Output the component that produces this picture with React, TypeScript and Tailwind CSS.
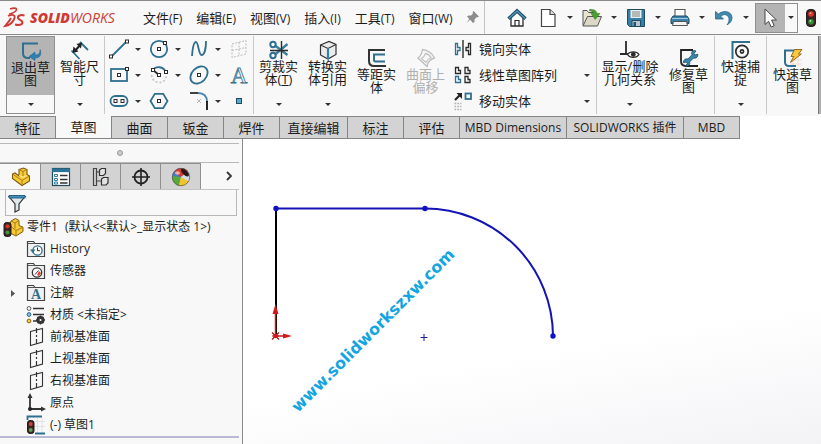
import type { ReactNode } from 'react'

import clsx from 'clsx'

const BLUE = '#2f6f8f'
const DARK = '#2b2b2b'

type IconProps = { children: ReactNode; className?: string; box?: string }

function Icon({ children, className = 'size-5', box = '0 0 20 20' }: IconProps) {
  return (
    <svg viewBox={box} fill="none" className={clsx('shrink-0 overflow-visible', className)} aria-hidden="true">
      {children}
    </svg>
  )
}

function Caret() {
  return (
    <svg viewBox="0 0 6 3" className="w-[6px] h-[3px] shrink-0" aria-hidden="true">
      <path d="M0 0h6L3 3z" fill="#333" />
    </svg>
  )
}

// 小方块控制点
function Grip({ x, y }: { x: number; y: number }) {
  return <rect x={x - 1.5} y={y - 1.5} width="3" height="3" fill="#fff" stroke={DARK} />
}

/* ---------- 菜单栏图标 ---------- */

function DassaultMark() {
  return (
    <Icon className="w-[22px] h-[21px]" box="0 0 22 21">
      <path d="M6 2C9 .8 12.500 .6 12.500 2.500C12.500 4 9 6 5 7.300" stroke="#cf3a35" strokeWidth="1.600" />
      <path
        d="M4 9C9.500 6.500 12 8.500 10 12.500C8 16.500 4 18.500 1 19C3 16.500 5.500 14 7 11"
        stroke="#cf3a35"
        strokeWidth="1.800"
      />
      <path
        d="M20.500 8.500C16.500 7.500 13.500 8.500 14 11C14.300 13 18.500 12.800 18.500 15.500C18.500 18 14.500 18.500 11 17.500"
        stroke="#cf3a35"
        strokeWidth="2"
      />
    </Icon>
  )
}

function PinIcon() {
  return (
    <Icon className="size-[15px]" box="0 0 15 15">
      <path d="M8.500 1L14 6.500L12 7.500L11.500 7.200L9.500 9.500V12L8 13L5.200 9.800L1.500 13L4.400 9L2 6.500L3.500 5.500H6L8 3.500L7.500 2.500z" fill="#8c8c8c" />
    </Icon>
  )
}

function HomeIcon() {
  return (
    <Icon>
      <path d="M4 9.500V18h12V9.500L10 4z" fill="#fdfdfd" stroke={DARK} strokeWidth="1.300" />
      <path d="M1.500 10.800L10 2.800L18.500 10.800" stroke="#1e4c63" strokeWidth="3.400" />
      <path d="M1.800 10.600L10 2.900L18.200 10.600" stroke="#4b93b5" strokeWidth="1.400" />
      <path d="M8 18v-5.500h4V18" stroke={DARK} strokeWidth="1.200" />
    </Icon>
  )
}

function NewIcon() {
  return (
    <Icon>
      <path d="M3.500 1.500h8.500l5 5v12H3.500z" fill="#fff" stroke="#444" strokeWidth="1.200" />
      <path d="M12 1.500v5h5" fill="#ddd" stroke="#444" strokeWidth="1.200" />
    </Icon>
  )
}

function OpenIcon() {
  return (
    <Icon>
      <path d="M1 17.500V2.500h4l1.500 2h7v4" fill="#e8e4d2" stroke="#555" />
      <path d="M1 18L5.500 8.500h14L15.500 18z" fill="#dcd8c8" stroke="#555" />
      <path d="M7.500 1.500c4.500-.5 7 1 7.500 4h3l-4.800 6L9 5.500h2.500c0-1.800-1.500-2.700-4-2.600z" fill="#48a02e" stroke="#2c7420" strokeWidth=".5" />
    </Icon>
  )
}

function SaveIcon() {
  return (
    <Icon>
      <path d="M1.500 1.500h17v17H3.500l-2-2z" fill="#3580a8" stroke="#1f4b63" />
      <path d="M4.500 2h11v8h-11z" fill="#e9eef1" />
      <path d="M6 4h8M6 6h8M6 8h8" stroke="#777" strokeWidth=".9" />
      <path d="M6 12.500h8.500v6H6z" fill="#b9c6cd" stroke="#1f4b63" />
      <path d="M7.500 14h2.500v4H7.500z" fill="#25526b" />
    </Icon>
  )
}

function PrintIcon() {
  return (
    <Icon>
      <path d="M5 9V1.500h10V9" fill="#fff" stroke="#555" strokeWidth="1.100" />
      <path d="M3 8h14l2 3v4.500H1V11z" fill="#3a82aa" stroke="#1f4b63" />
      <path d="M2 10.500h16" stroke="#9bcae0" />
      <path d="M3.500 13.500h13l1 4h-15z" fill="#f4f4f4" stroke="#555" />
    </Icon>
  )
}

function UndoIcon() {
  return (
    <Icon>
      <path
        d="M1.500 3.500V11h8L6.700 8.200C10 5.500 14.500 6.500 15 10.500C15.300 12.800 14.500 15 13 16.800C17 15 19 11 17.500 7.300C15.500 3 9 2.300 4.500 6z"
        fill="#4289ae"
        stroke="#2a6686"
        strokeWidth=".8"
      />
    </Icon>
  )
}

function CursorIcon() {
  return (
    <Icon>
      <path d="M5 1v15.500l3.600-3.200L11.200 19l3-1.300L11.600 12H16.500z" fill="#fff" stroke="#444" />
    </Icon>
  )
}

function TrafficLight({ className = 'w-[10px] h-[18px]' }: { className?: string }) {
  return (
    <Icon className={className} box="0 0 10 18">
      <rect x=".5" y=".5" width="9" height="17" rx="3.500" fill="#3c2222" stroke="#1e1e1e" />
      <circle cx="5" cy="5" r="2.800" fill="#e0342b" />
      <circle cx="4.400" cy="4.200" r=".9" fill="#f6a49c" />
      <circle cx="5" cy="12.800" r="2.800" fill="#2f8f35" />
      <circle cx="4.400" cy="12" r=".9" fill="#b5e0a2" />
    </Icon>
  )
}

/* ---------- 草图工具图标 ---------- */

const LineIcon = () => (
  <Icon>
    <path d="M2 18L18 2" stroke={BLUE} strokeWidth="1.800" />
    <Grip x={2} y={17.5} />
    <Grip x={18} y={2.5} />
  </Icon>
)

const CircleIcon = () => (
  <Icon>
    <circle cx="10" cy="10" r="8.200" stroke={BLUE} strokeWidth="1.800" />
    <Grip x={10} y={10} />
    <Grip x={16} y={4} />
  </Icon>
)

const SplineIcon = () => (
  <Icon>
    <path d="M3 17C3.500 10 4.500 3 7 3S9.500 16 12.500 16S17 9 17 2" stroke={BLUE} strokeWidth="1.800" />
  </Icon>
)

const PlaneGridIcon = () => (
  <Icon>
    <path d="M3 5L17 1.500V15L3 18.500zM10 3v14M3 11.500l14-3" stroke="#b9b9b9" strokeDasharray="2 1.500" />
  </Icon>
)

const RectIcon = () => (
  <Icon>
    <rect x="2" y="4" width="16" height="12" stroke={BLUE} strokeWidth="1.800" />
    <Grip x={10} y={10} />
    <Grip x={18} y={4} />
  </Icon>
)

const ArcIcon = () => (
  <Icon>
    <path d="M4 5C7 1 14 1 17 7" stroke={BLUE} strokeWidth="1.800" />
    <path d="M2.500 10C3.500 20 17 20 17.500 10" stroke="#c4c4c4" strokeWidth="1.600" strokeDasharray="2 2" />
    <path d="M4 5l6 5" stroke={DARK} strokeWidth="1.800" />
    <Grip x={4} y={5} />
    <Grip x={10} y={10} />
    <Grip x={17} y={7} />
  </Icon>
)

const EllipseIcon = () => (
  <Icon>
    <ellipse cx="10" cy="10" rx="9.800" ry="7.200" transform="rotate(-45 10 10)" stroke={BLUE} strokeWidth="1.800" />
    <Grip x={10} y={10} />
  </Icon>
)

// 文字工具，空心字母
const TextToolIcon = () => (
  <Icon>
    <text
      x="10"
      y="18"
      textAnchor="middle"
      fontFamily="Liberation Serif, serif"
      fontSize="23"
      fill="#f6f9fa"
      stroke={BLUE}
      strokeWidth=".8"
    >
      A
    </text>
  </Icon>
)

const SlotIcon = () => (
  <Icon>
    <rect x="1.500" y="5" width="17" height="10" rx="5" stroke={BLUE} strokeWidth="1.800" />
    <Grip x={6.5} y={10} />
    <Grip x={13.5} y={10} />
  </Icon>
)

const PolygonIcon = () => (
  <Icon>
    <path d="M5.800 2.800h8.400L18.500 10l-4.300 7.200H5.800L1.500 10z" stroke={BLUE} strokeWidth="1.800" />
    <Grip x={10} y={10} />
  </Icon>
)

const FilletIcon = () => (
  <Icon>
    <path d="M1 2h8" stroke={DARK} strokeWidth="1.800" />
    <path d="M9 2c6 0 9 3 9 9" stroke="#4a87b5" strokeWidth="1.800" />
    <path d="M18 10v9" stroke="#111" strokeWidth="1.800" />
    <path d="M8 8l4 4M12 8l-4 4" stroke="#b5b5b5" />
  </Icon>
)

const PointIcon = () => (
  <Icon>
    <rect x="7.500" y="7.500" width="5" height="5" fill="#5aa7c8" stroke="#1f4b63" />
  </Icon>
)

/* ---------- 功能区大图标 ---------- */

const ExitSketchIcon = () => (
  <Icon>
    <path d="M17 2.500H2v9.500c0 3 1.500 5 5 5h2" stroke={BLUE} strokeWidth="2" />
    <path d="M19 8.500c.3 4-1.700 5.500-5 5.500v-3l-6 4.500 6 4V17c5 0 7-3.500 5-8.500z" fill="#2b83b5" stroke="#1d5d82" strokeWidth=".5" />
  </Icon>
)

const DimensionIcon = () => (
  <Icon>
    <path d="M10 2l8 8M1.500 10.500l8 8.500" stroke={BLUE} strokeWidth="1.800" />
    <path d="M4.500 11.500L10.500 4.500" stroke="#222" strokeWidth="2" />
    <path d="M2.500 13l1-6.500 5 5zM12 2.500L6.500 4l4.500 4.500z" fill="#222" />
  </Icon>
)

const TrimIcon = () => (
  <Icon>
    <path d="M6 5.500L18.500 15M6 14.500L18.500 4" stroke="#3f7f9e" strokeWidth="2.400" />
    <path d="M12.500 1v18M1 10.500h18" stroke={DARK} strokeWidth="1.400" />
    <circle cx="4" cy="4.500" r="2.700" stroke={BLUE} strokeWidth="2" />
    <circle cx="4" cy="15.500" r="2.700" stroke={BLUE} strokeWidth="2" />
  </Icon>
)

const ConvertIcon = () => (
  <Icon>
    <path d="M2.500 5L11 1.500l7 3v10L10 19l-7.500-4z" fill="#ececec" stroke="#333" strokeWidth="1.200" />
    <path d="M2.500 5L10 8.500l8-4" stroke="#333" strokeWidth="1.100" />
    <path d="M10 8.500V19" stroke="#2f83ad" strokeWidth="2.200" />
  </Icon>
)

const OffsetIcon = () => (
  <Icon>
    <path d="M18 2H2v11c0 4 2 5 5 5h12" stroke="#333" strokeWidth="2" />
    <path d="M18 6.500H7V12c0 1 .5 1.500 1.500 1.500H18" stroke={BLUE} strokeWidth="2" />
  </Icon>
)

const SurfaceOffsetIcon = () => (
  <Icon>
    <path d="M2 10C5 8 6 5 6.500 1.500C11 2 16.500 5 18.500 10C14 11 12 14 11 18.500z" stroke="#bcbcbc" strokeWidth="1.300" />
    <path d="M5.500 10.500C8 9 9 7 9.500 5.500C12 6 14 7.500 15 9.500C12.500 10.500 11 12 10 14.500z" stroke="#c4c4c4" strokeWidth="1.300" />
  </Icon>
)

const RelationIcon = () => (
  <Icon>
    <path d="M6 1v13M0 14h9" stroke={DARK} strokeWidth="1.800" />
    <path d="M7.500 14.500C10 11 16.500 11 19 14.500C16.500 18.500 10 18.500 7.500 14.500z" fill="#fff" stroke={DARK} strokeWidth="1.200" />
    <circle cx="13.300" cy="14.500" r="2.400" fill={DARK} />
  </Icon>
)

const RepairIcon = () => (
  <Icon>
    <path d="M14 2H2v11c0 3 1.500 5 5 5h12" stroke="#222" strokeWidth="1.800" />
    <path
      d="M13 3.500c2-1.500 3.500-1 4-.5l-2 2.500.8 1.500 3-.8c.5 3-2 4.500-4.300 3.800L10.500 14c1 2.500-1 4.500-4 4l1.800-2.500-1-1.500-2.800.8c-.3-3 2-4.500 4.500-3.800l4-4.200c-.3-1.200-.5-2.300 0-3.300z"
      fill="#3b86ac"
      stroke="#174a66"
      strokeWidth=".8"
    />
  </Icon>
)

const SnapIcon = () => (
  <Icon>
    <path d="M1.500 19V2H19" stroke={BLUE} strokeWidth="2" />
    <circle cx="11" cy="11.500" r="6.200" stroke={DARK} strokeWidth="1.700" />
    <circle cx="11" cy="11.500" r="1.600" stroke={DARK} strokeWidth="1.600" />
  </Icon>
)

const RapidIcon = () => (
  <Icon>
    <path d="M7 12h12M7 16h12M10 8v11M15 8v11" stroke="#f1d6c4" strokeWidth=".8" />
    <path d="M14 2.500H2V14c0 2.500 1.500 4 4 4h7" stroke={BLUE} strokeWidth="2" />
    <path d="M11.500 1.500H19l-3.500 4.500h2.800L7.500 14.500l3.300-6H8z" fill="#fbc63b" stroke="#8a5c18" strokeWidth=".9" />
  </Icon>
)

const MirrorIcon = () => (
  <Icon>
    <path d="M10 1v18" stroke={DARK} strokeWidth="1.400" />
    <path d="M2.500 4.500v11h2v-4h2.500v-3H4.500v-4z" stroke={BLUE} strokeWidth="1.300" />
    <path d="M17.500 4.500v11h-2v-4H13v-3h2.500v-4z" stroke={DARK} strokeWidth="1.300" />
  </Icon>
)

const PatternIcon = () => (
  <Icon>
    <path d="M2.500 2.500v6h5v-3h-2v-3zM12 2.500v6h5v-3h-2v-3zM12 11.500v6h5v-3h-2v-3z" stroke={DARK} strokeWidth="1.300" />
    <path d="M2.500 11.500v6h5v-3h-2v-3z" stroke={BLUE} strokeWidth="1.300" />
  </Icon>
)

const MoveIcon = () => (
  <Icon>
    <path d="M2 9l5-5" stroke="#222" strokeWidth="2.200" />
    <path d="M3.500 2H9v6z" fill="#222" />
    <rect x="12.500" y="2.500" width="5.500" height="5.500" stroke={BLUE} strokeWidth="1.800" />
    <path d="M1.500 12.500h7M1.500 15.500h7M1.500 18.500h7" stroke="#b0b0b0" strokeWidth="1.600" strokeDasharray="1.700 1.200" />
  </Icon>
)

/* ---------- 设计树图标 ---------- */

const PartIcon = () => (
  <Icon>
    <path d="M8 2.500L12.500 1l3.500 1.500v5l2.500 1.500v5L11 18.500l-9.500-7V7L4 6l4 3z" fill="#f7cb35" stroke="#7d5a12" strokeWidth="1.100" />
    <path d="M8 2.500l4 2 4-2M12 4.500v5M1.500 7L11 13.500l7.500-4.500M11 13.500v5" stroke="#a87c18" />
    <path d="M8 8.500l4 1.700 3.500-1.700" stroke="#fff0a8" />
  </Icon>
)

const PropertyIcon = () => (
  <Icon>
    <rect x="1.500" y="1.500" width="17" height="17" fill="#fff" stroke="#25495c" strokeWidth="1.200" />
    <path d="M1 3.300h18" stroke="#2b7297" strokeWidth="3.600" />
    <path d="M9 8.500h7.500M9 12.500h7.500M9 16h7.500" stroke="#333" strokeWidth="1.300" />
    <path d="M3.500 7.500h3v2h-3zM3.500 11.500h3v2h-3zM3.500 15h3v2h-3z" stroke="#2f7fa5" />
  </Icon>
)

const ConfigIcon = () => (
  <Icon>
    <path d="M2.500 1.500h3v17h-3zM5.500 5h4M5.500 14h5" stroke="#444" strokeWidth="1.200" />
    <path d="M8.500 3l2-1.500h4v5L12.500 8.500h-4zM10.500 12l2-1.500h4.500V16l-2 2h-4.500z" fill="#e2e2e2" stroke="#333" strokeWidth="1.200" />
  </Icon>
)

const DimXpertIcon = () => (
  <Icon>
    <circle cx="10" cy="10" r="6.500" stroke="#222" strokeWidth="1.800" />
    <path d="M10 1v18M1 10h18" stroke="#222" strokeWidth="1.600" />
  </Icon>
)

const AppearanceIcon = () => (
  <Icon>
    <path d="M10 10L1.500 12A9 9 0 0 1 11 1z" fill="#4777c8" />
    <path d="M10 10L3 5A9 9 0 0 1 17 4z" fill="#d93a2e" />
    <path d="M1 9a9 9 0 0 0 7 10l2-9z" fill="#58a93c" />
    <path d="M8 19a9 9 0 0 0 10-5l-8-4z" fill="#f3c42f" />
    <path d="M18 14a9 9 0 0 0 0-8l-8 4z" fill="#d6dfe8" />
    <ellipse cx="14" cy="5.500" rx="2.300" ry="5" transform="rotate(-45 14 5.500)" fill="#2c1717" />
    <circle cx="10" cy="10" r="8.700" stroke="#555" strokeWidth=".7" />
    <ellipse cx="6.500" cy="6" rx="2.500" ry="1.800" fill="#fff" opacity=".6" />
  </Icon>
)

const FilterIcon = () => (
  <Icon>
    <path d="M2 3.500h16l-6 7.500v6l-4 2v-8z" fill="#dfe8ec" stroke="#333" strokeWidth="1.200" />
    <path d="M2 2.500h16V5H2z" fill="#3c93bd" stroke="#1f5775" strokeWidth=".9" />
  </Icon>
)

const RootIcon = () => (
  <Icon className="size-[21px]" box="0 0 21 20">
    <path d="M8 3.500L12.500 1l3.500 2v5l4 1.700V14l-7 4.500L6 15V8z" fill="#f7cb35" stroke="#7d5a12" />
    <path d="M8 3.500l4 2 4-2.500M12 5.500V11M8 9l5 4 7-3.300M13 13v5.500" stroke="#a87c18" />
    <rect x="1" y="5" width="7" height="14" rx="2.500" fill="#3c2222" stroke="#1e1e1e" />
    <circle cx="4.500" cy="8.800" r="2.100" fill="#d8352d" />
    <circle cx="4.500" cy="15" r="2.100" fill="#3f9440" />
  </Icon>
)

function FolderIcon({ children }: { children: ReactNode }) {
  return (
    <Icon>
      <path d="M1.500 17.500v-15h6l1.500 2h9.500v13z" fill="#f0f0f0" stroke="#444" strokeWidth="1.200" />
      <path d="M2 4.500h7" stroke="#555" />
      {children}
    </Icon>
  )
}

const HistoryIcon = () => (
  <FolderIcon>
    <circle cx="11.500" cy="11.500" r="4.600" fill="#fff" stroke={BLUE} strokeWidth="1.300" />
    <path d="M11.500 8.500v3.200h2.500" stroke="#333" />
    <path d="M4 10.500h5.500L6.700 14z" fill={BLUE} />
  </FolderIcon>
)

const SensorIcon = () => (
  <FolderIcon>
    <circle cx="11" cy="11.500" r="4.700" fill="#fff" stroke="#333" strokeWidth="1.300" />
    <path d="M9 13.500l3.500-4" stroke="#333" />
    <path d="M13 10l2 2-2 3-2-1z" fill="#dc4637" />
  </FolderIcon>
)

const AnnotationIcon = () => (
  <FolderIcon>
    <text x="10" y="16" textAnchor="middle" fontFamily="Liberation Serif, serif" fontWeight="700" fontSize="14" fill={BLUE}>
      A
    </text>
  </FolderIcon>
)

const MaterialIcon = () => (
  <Icon>
    <path d="M7 3.500h11M7 9.500h11M7 16h5" stroke="#333" strokeWidth="1.600" />
    <circle cx="3" cy="3.500" r="1.900" fill="#fff" stroke="#555" />
    <circle cx="3" cy="9.500" r="1.900" fill="#7fc1e2" stroke="#2b6688" />
    <circle cx="3" cy="16" r="1.900" fill="#f7ca3c" stroke="#8b6814" />
    <circle cx="14.500" cy="15" r="3" stroke="#333" strokeWidth="2" />
    <path d="M14.500 10.500v9M10 15h9M11.500 12l6 6M17.500 12l-6 6" stroke="#333" strokeWidth="1.300" />
    <circle cx="14.500" cy="15" r="1" fill="#fff" />
  </Icon>
)

const PlaneIcon = () => (
  <Icon>
    <path d="M4.500 4.500L16.500 1.500V15L4.500 18.500z" stroke="#333" strokeWidth="1.100" />
    <path d="M10.500 1v18" stroke="#333" strokeWidth="1.200" strokeDasharray="5 2 2 2" />
  </Icon>
)

const OriginIcon = () => (
  <Icon>
    <path d="M4 3v13h13" stroke="#333" strokeWidth="1.800" />
    <path d="M4 0l2.500 5h-5zM20 16l-5-2.500v5z" fill="#333" />
    <circle cx="4" cy="16" r="2" fill="#222" />
  </Icon>
)

const SketchIcon = () => (
  <Icon>
    <path d="M8 6.500h11M8 11.500h11M11.500 3v15M16 3v15" stroke="#d9dfe2" strokeWidth=".8" />
    <path d="M1.500 5V1.500H16M9 18.500h10" stroke={BLUE} strokeWidth="1.800" />
    <rect x="1.500" y="5.500" width="6.500" height="13" rx="2.500" fill="#3c2222" stroke="#1e1e1e" />
    <circle cx="4.700" cy="9" r="2" fill="#c8463c" />
    <circle cx="4.700" cy="15" r="2" fill="#5ba356" />
  </Icon>
)

/* ---------- 数据 ---------- */

const menus = [
  { label: '文件', key: '(F)' },
  { label: '编辑', key: '(E)' },
  { label: '视图', key: '(V)' },
  { label: '插入', key: '(I)' },
  { label: '工具', key: '(T)' },
  { label: '窗口', key: '(W)' },
]

const quickTools = [
  { name: '新建', icon: <NewIcon /> },
  { name: '打开', icon: <OpenIcon /> },
  { name: '保存', icon: <SaveIcon /> },
  { name: '打印', icon: <PrintIcon /> },
  { name: '撤销', icon: <UndoIcon /> },
]

const sketchTools = [
  { name: '直线', icon: <LineIcon />, menu: true },
  { name: '圆', icon: <CircleIcon />, menu: true },
  { name: '样条曲线', icon: <SplineIcon />, menu: true },
  { name: '基准面', icon: <PlaneGridIcon />, menu: false },
  { name: '矩形', icon: <RectIcon />, menu: true },
  { name: '圆弧', icon: <ArcIcon />, menu: true },
  { name: '椭圆', icon: <EllipseIcon />, menu: true },
  { name: '文字', icon: <TextToolIcon />, menu: false },
  { name: '槽口', icon: <SlotIcon />, menu: true },
  { name: '多边形', icon: <PolygonIcon />, menu: false },
  { name: '圆角', icon: <FilletIcon />, menu: true },
  { name: '点', icon: <PointIcon />, menu: false },
]

const patternTools = [
  { label: '镜向实体', icon: <MirrorIcon />, menu: false },
  { label: '线性草图阵列', icon: <PatternIcon />, menu: true },
  { label: '移动实体', icon: <MoveIcon />, menu: true },
]

const ribbonTabs = [
  { label: '特征', width: 'w-14' },
  { label: '草图', width: 'w-14' },
  { label: '曲面', width: 'w-14' },
  { label: '钣金', width: 'w-14' },
  { label: '焊件', width: 'w-14' },
  { label: '直接编辑', width: 'w-[68px]' },
  { label: '标注', width: 'w-14' },
  { label: '评估', width: 'w-14' },
  { label: 'MBD Dimensions', width: 'w-[107px]' },
  { label: 'SOLIDWORKS 插件', width: 'w-[117px]' },
  { label: 'MBD', width: 'w-14' },
]

const panelTabs = [
  { name: '设计树', icon: <PartIcon /> },
  { name: '属性', icon: <PropertyIcon /> },
  { name: '配置', icon: <ConfigIcon /> },
  { name: '尺寸专家', icon: <DimXpertIcon /> },
  { name: '外观', icon: <AppearanceIcon /> },
]

const treeItems = [
  { label: 'History', icon: <HistoryIcon /> },
  { label: '传感器', icon: <SensorIcon /> },
  { label: '注解', icon: <AnnotationIcon />, expandable: true },
  { label: '材质 <未指定>', icon: <MaterialIcon /> },
  { label: '前视基准面', icon: <PlaneIcon /> },
  { label: '上视基准面', icon: <PlaneIcon /> },
  { label: '右视基准面', icon: <PlaneIcon /> },
  { label: '原点', icon: <OriginIcon /> },
  { label: '(-) 草图1', icon: <SketchIcon /> },
]

/* ---------- 布局 ---------- */

function TopBar() {
  return (
    <header className="flex items-center h-[35px] border-y border-[#8a8a8a] bg-[#f8f8f8]">
      <div className="flex items-center w-[143px] pl-1 gap-1 shrink-0">
        <DassaultMark />
        <span className="text-sm leading-5 italic text-[#cf3a35]">
          <b className="font-extrabold">SOLID</b>WORKS
        </span>
      </div>
      <nav className="flex items-center gap-[14px] shrink-0">
        {menus.map(menu => (
          <button key={menu.key} className="text-[13px] leading-5 whitespace-nowrap">
            {menu.label}
            <span className="text-xs">{menu.key}</span>
          </button>
        ))}
      </nav>
      <button aria-label="固定菜单" className="ml-3 mr-1 shrink-0">
        <PinIcon />
      </button>
      <div className="flex items-center self-stretch flex-1 border-l border-[#c4c4c4] pl-[22px]">
        <button aria-label="主页" className="mr-2">
          <HomeIcon />
        </button>
        {quickTools.map(tool => (
          <div key={tool.name} className="flex">
            <button aria-label={tool.name} className="flex justify-center w-[26px]">
              {tool.icon}
            </button>
            <button aria-label={`${tool.name}选项`} className="flex items-center justify-center w-[18px]">
              <Caret />
            </button>
          </div>
        ))}
        <div className="flex h-[30px] border border-[#8f8f8f] shrink-0">
          <button aria-label="选择" className="flex items-center justify-center w-[29px] bg-[#b4b4b4]">
            <CursorIcon />
          </button>
          <button aria-label="选择选项" className="flex items-center justify-center w-3">
            <Caret />
          </button>
        </div>
        <button aria-label="重建模型" className="ml-2 shrink-0">
          <TrafficLight />
        </button>
      </div>
    </header>
  )
}

type BigButtonProps = {
  icon: ReactNode
  label: ReactNode
  menu?: boolean
  active?: boolean
  disabled?: boolean
  width?: string
  labelWidth?: string
}

function BigButton({
  icon,
  label,
  menu,
  active,
  disabled,
  width = 'w-[49px]',
  labelWidth = 'w-10',
}: BigButtonProps) {
  return (
    <div className={clsx('flex flex-col h-[78px] shrink-0', width, active && 'border border-[#8f8f8f]')}>
      <button
        disabled={disabled}
        className={clsx(
          'flex flex-col items-center text-[13px] leading-[13px]',
          menu ? 'h-[58px] pt-1' : 'flex-1 pt-3',
          active && 'bg-[#b4b4b4]',
          disabled && 'text-[#b0b0b0]',
        )}
      >
        {icon}
        <span className={labelWidth}>{label}</span>
      </button>
      {menu && (
        <button aria-label="更多" className="flex items-center justify-center flex-1">
          <Caret />
        </button>
      )}
    </div>
  )
}

function Separator() {
  return <div className="w-px h-[78px] bg-[#c8c8c8] shrink-0" />
}

function Ribbon() {
  return (
    <section className="flex h-[81px] pt-px pl-[6px] bg-[#f8f8f8]">
      <BigButton icon={<ExitSketchIcon />} label="退出草图" menu active />
      <BigButton icon={<DimensionIcon />} label="智能尺寸" menu />
      <Separator />
      <div className="grid grid-cols-[40px_40px_40px_20px] auto-rows-[26px] px-1 shrink-0">
        {sketchTools.map(tool => (
          <div key={tool.name} className="flex items-center">
            <button aria-label={tool.name}>{tool.icon}</button>
            {tool.menu && (
              <button aria-label={`${tool.name}选项`} className="flex items-center justify-center w-[18px] h-5">
                <Caret />
              </button>
            )}
          </div>
        ))}
      </div>
      <Separator />
      <BigButton
        icon={<TrimIcon />}
        label={
          <>
            剪裁实体(<u>T</u>)
          </>
        }
        menu
      />
      <BigButton icon={<ConvertIcon />} label="转换实体引用" menu />
      <BigButton icon={<OffsetIcon />} label="等距实体" />
      <BigButton icon={<SurfaceOffsetIcon />} label="曲面上偏移" disabled />
      <div className="grid auto-rows-[26px] w-[146px] pl-[3px] shrink-0">
        {patternTools.map(tool => (
          <div key={tool.label} className="flex items-center justify-between">
            <button className="flex items-center gap-[6px] text-[13px] leading-5 whitespace-nowrap">
              {tool.icon}
              {tool.label}
            </button>
            {tool.menu && (
              <button aria-label={`${tool.label}选项`} className="flex items-center justify-center w-[18px] h-5">
                <Caret />
              </button>
            )}
          </div>
        ))}
      </div>
      <Separator />
      <BigButton icon={<RelationIcon />} label="显示/删除几何关系" menu width="w-[66px]" labelWidth="w-[60px]" />
      <BigButton icon={<RepairIcon />} label="修复草图" width="w-[51px]" />
      <Separator />
      <BigButton icon={<SnapIcon />} label="快速捕捉" menu width="w-[51px]" />
      <Separator />
      <BigButton icon={<RapidIcon />} label="快速草图" width="w-[51px]" />
      <div className="flex-1 h-[78px] bg-[#b0b0b0] border-l border-[#777]" />
    </section>
  )
}

function RibbonTabs() {
  return (
    <div role="tablist" className="flex h-[23px] bg-white">
      {ribbonTabs.map(tab => {
        const active = tab.label === '草图'
        return (
          <button
            key={tab.label}
            role="tab"
            aria-selected={active}
            className={clsx(
              'flex items-center justify-center shrink-0 text-[13px] leading-5 whitespace-nowrap border-b border-[#858585]',
              tab.width,
              active ? 'bg-[#f8f8f8] border-r' : 'bg-[#d3d3d3] border-t border-r',
            )}
          >
            <span className={clsx(/^[A-Z]/.test(tab.label) && 'text-xs')}>{tab.label}</span>
          </button>
        )
      })}
    </div>
  )
}

function FeaturePanel() {
  return (
    <aside className="w-[243px] shrink-0 bg-[#f8f8f8] border-r border-[#8a8a8a]">
      <div className="flex items-center justify-center h-5 mt-1 mr-[3px] border-y border-[#b8b8b8]">
        <span className="size-[6px] rounded-full border border-[#999] bg-[#ccc]" />
      </div>
      <div className="flex items-stretch h-[27px] mr-[3px] border-b border-[#c4c4c4]">
        <div role="tablist" className="flex border-t border-[#8f8f8f] pl-px">
          {panelTabs.map((tab, index) => (
            <button
              key={tab.name}
              role="tab"
              aria-label={tab.name}
              aria-selected={index === 0}
              className={clsx(
                'flex items-center justify-center w-10 border-r border-[#8f8f8f]',
                index === 0 ? 'bg-[#f8f8f8]' : 'bg-[#d3d3d3]',
              )}
            >
              {tab.icon}
            </button>
          ))}
        </div>
        <button aria-label="更多标签" className="flex items-center ml-auto mr-[7px]">
          <svg viewBox="0 0 6 10" className="w-[6px] h-[10px]" fill="none" aria-hidden="true">
            <path d="M1 1l4 4-4 4" stroke="#333" strokeWidth="1.800" />
          </svg>
        </button>
      </div>
      <label className="flex items-center h-[26px] ml-[5px] mr-[5px] pl-px border border-t-0 border-[#b8b8b8]">
        <FilterIcon />
        <input aria-label="过滤" className="flex-1 min-w-0 px-1 text-xs bg-transparent outline-none" />
      </label>
      <ul className="border-b-2 border-[#b9b9d3] mr-[3px] text-xs leading-[22px] whitespace-pre">
        <li className="flex items-center h-[22px] pl-[3px] gap-[3px]">
          <RootIcon />
          <span>零件1</span>
          <span className="ml-1">{'(默认<<默认>_显示状态 1>)'}</span>
        </li>
        {treeItems.map(item => (
          <li key={item.label} className="flex items-center h-[22px]">
            <span className="flex justify-center w-[26px]">
              {item.expandable && (
                <svg viewBox="0 0 4 7" className="w-1 h-[7px]" aria-hidden="true">
                  <path d="M0 0l4 3.500L0 7z" fill="#555" />
                </svg>
              )}
            </span>
            <span className="flex items-center gap-1">
              {item.icon}
              {item.label}
            </span>
          </li>
        ))}
      </ul>
    </aside>
  )
}

function SketchCanvas() {
  return (
    <main className="flex-1 overflow-hidden bg-[linear-gradient(170deg,#fff_65%,#f3f3f6)]">
      <svg width="577" height="305" fill="none" role="img" aria-label="草图">
        <path d="M33 69V197" stroke="#000" strokeWidth="2" />
        <path d="M33 69.500H182A128 128 0 0 1 310 197" stroke="#1414b4" strokeWidth="2" />
        <circle cx="33" cy="69.500" r="2.700" fill="#1010c8" />
        <circle cx="182" cy="69.500" r="2.700" fill="#1010c8" />
        <circle cx="310" cy="197" r="2.700" fill="#1010c8" />
        <path d="M177.500 198.500h7M181 195v7" stroke="#1a1a96" />
        <path d="M32.500 197V175M33 197h10" stroke="#d01818" strokeWidth="1.500" />
        <path d="M32.500 165l3 10h-6zM49 197l-9-2.500v5z" fill="#d01818" />
        <path d="M29 193.500l7 7M36 193.500l-7 7M29 197h7" stroke="#a01818" strokeWidth="1.200" />
        <circle cx="32.500" cy="197" r="2.200" fill="#d01818" />
        <text
          transform="translate(55 274) rotate(-45)"
          fontFamily="DejaVu Sans, sans-serif"
          fontWeight="700"
          fontSize="16"
          fill="#12a5e2"
        >
          www.solidworkszxw.com
        </text>
      </svg>
    </main>
  )
}

export default function App() {
  return (
    <div className="flex flex-col min-h-screen overflow-hidden bg-white text-[#1c1c1c] font-['Open_Sans','Noto_Sans_CJK_SC',sans-serif]">
      <TopBar />
      <Ribbon />
      <RibbonTabs />
      <div className="flex flex-1">
        <FeaturePanel />
        <SketchCanvas />
      </div>
    </div>
  )
}
